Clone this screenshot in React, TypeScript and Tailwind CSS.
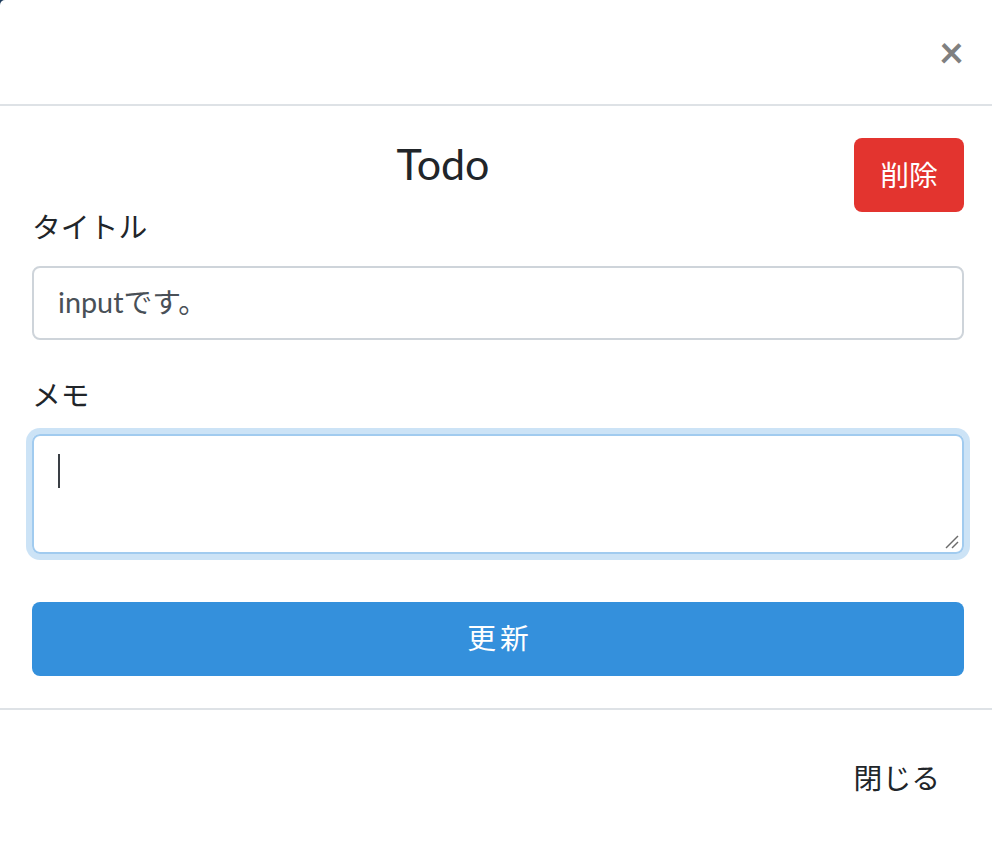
import React from "react";

const font = { fontFamily: 'Lato, "Noto Sans CJK JP", sans-serif' };

export default function App() {
  return (
    <div className="w-[992px] h-[842px] overflow-hidden bg-[#1d3b5c]" style={font}>
      <div className="h-full bg-white rounded-tl-[5px] flex flex-col">
        {/* header */}
        <div className="h-[106px] shrink-0 border-b-2 border-[#dee2e6] flex items-center justify-end pr-[28px]">
          <button className="text-[43px] leading-none font-bold text-[#808080] pb-[2px]">×</button>
        </div>
        {/* body */}
        <div className="pl-[32px] pr-[28px] pt-[32px] pb-[32px] border-b-2 border-[#dee2e6]">
          <div className="flex h-[52px] mb-[14px]">
            <h4 className="flex-1 text-center text-[43px] leading-[52px] text-[#212529] font-normal">Todo</h4>
            <button className="h-[74px] w-[110px] shrink-0 rounded-[8px] bg-[#e3342f] text-white text-[28.8px] leading-[46px]">
              削除
            </button>
          </div>
          <label className="block text-[28.8px] leading-[46px] mb-[16px] text-[#212529]">タイトル</label>
          <div className="h-[74px] border-2 border-[#ced4da] rounded-[8px] px-[24px] flex items-center text-[28.8px] text-[#495057] mb-[32px]">
            inputです。
          </div>
          <label className="block text-[28.8px] leading-[46px] mb-[16px] text-[#212529]">メモ</label>
          <div className="relative h-[120px] border-2 border-[#a1cbef] rounded-[8px] px-[24px] py-[12px] shadow-[0_0_0_6px_rgba(52,144,220,0.25)] mb-[48px]">
            <div className="h-[46px] flex items-center">
              <span className="block w-[2px] h-[34px] bg-[#3a3f45]" />
            </div>
            <svg className="absolute right-[2px] bottom-[2px]" width="16" height="16" viewBox="0 0 16 16">
              <line x1="2" y1="14" x2="14" y2="2" stroke="#6b6b6b" strokeWidth="1.5" />
              <line x1="8" y1="14" x2="14" y2="8" stroke="#6b6b6b" strokeWidth="1.5" />
            </svg>
          </div>
          <button className="w-full h-[74px] rounded-[8px] bg-[#3490dc] text-white text-[28.8px] tracking-[4px] pl-[4px]">
            更新
          </button>
        </div>
        {/* footer */}
        <div className="flex justify-end py-[24px] pl-[24px] pr-[20px]">
          <button className="m-[8px] h-[74px] px-[24px] text-[28.8px] text-[#212529]">閉じる</button>
        </div>
      </div>
    </div>
  );
}
